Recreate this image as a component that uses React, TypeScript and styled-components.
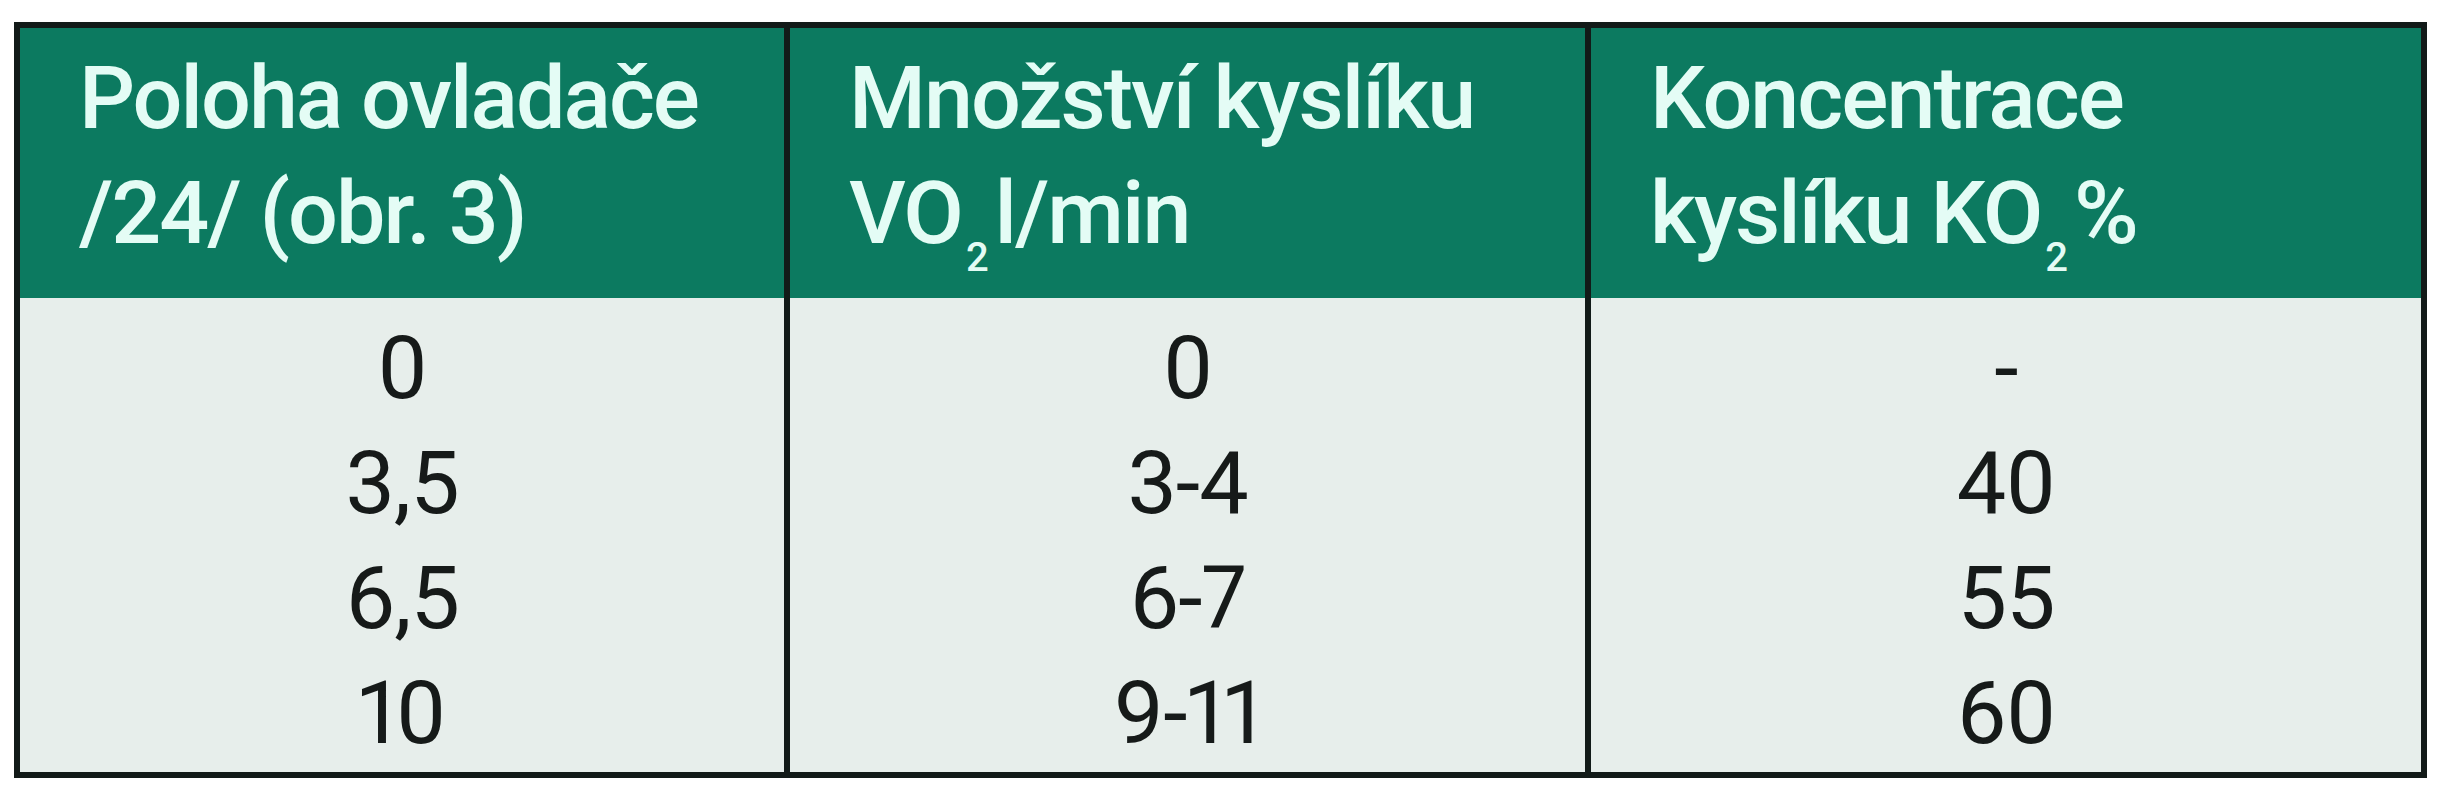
import React from 'react';
import styled, { createGlobalStyle } from 'styled-components';

// Types
interface Row {
  position: string;
  flow: string;
  concentration: string;
}

const rows: Row[] = [
  { position: '0', flow: '0', concentration: '-' },
  { position: '3,5', flow: '3-4', concentration: '40' },
  { position: '6,5', flow: '6-7', concentration: '55' },
  { position: '10', flow: '9-11', concentration: '60' },
];

// Styled Components
const GlobalStyle = createGlobalStyle`
  html, body {
    margin: 0;
    padding: 0;
    background: #ffffff;
  }
  body {
    font-family: Roboto, "Liberation Sans", Arial, sans-serif;
  }
`;

const Page = styled.div`
  padding: 22px 0 0 14px;
`;

const Table = styled.div`
  display: grid;
  grid-template-columns: 764px 795px 830px;
  grid-template-rows: 270px repeat(4, auto);
  column-gap: 6px;
  width: max-content;
  border: 6px solid #121a18;
  background: #121a18;
`;

const HeaderCell = styled.div`
  background: #0c7a60;
  color: #e4fcf5;
  font-size: 88px;
  font-weight: 500;
  line-height: 115px;
  letter-spacing: -2px;
  padding: 12px 20px 0 59px;
`;

const Sub = styled.span`
  font-size: 40px;
  line-height: 0;
  vertical-align: -28px;
  letter-spacing: 0;
  margin: 0 6px 0 4px;
`;

const DataCell = styled.div<{ $first?: boolean; $last?: boolean }>`
  background: #e7eeeb;
  color: #161a19;
  font-size: 88px;
  font-weight: 400;
  line-height: 115px;
  text-align: center;
  font-variant-numeric: proportional-nums;
  letter-spacing: -1px;
  padding-top: ${(p) => (p.$first ? '12px' : '0')};
  padding-bottom: ${(p) => (p.$last ? '2px' : '0')};
`;

// Component
const App: React.FC = () => {
  return (
    <>
      <GlobalStyle />
      <Page>
        <Table>
          <HeaderCell>
            Poloha ovladače
            <br />
            /24/ (obr. 3)
          </HeaderCell>
          <HeaderCell>
            Množství kyslíku
            <br />
            VO<Sub>2</Sub>l/min
          </HeaderCell>
          <HeaderCell>
            Koncentrace
            <br />
            kyslíku KO<Sub>2</Sub>%
          </HeaderCell>

          {rows.map((row, i) => {
            const first = i === 0;
            const last = i === rows.length - 1;
            return (
              <React.Fragment key={row.position}>
                <DataCell $first={first} $last={last}>{row.position}</DataCell>
                <DataCell $first={first} $last={last}>{row.flow}</DataCell>
                <DataCell $first={first} $last={last}>{row.concentration}</DataCell>
              </React.Fragment>
            );
          })}
        </Table>
      </Page>
    </>
  );
};

export default App;
